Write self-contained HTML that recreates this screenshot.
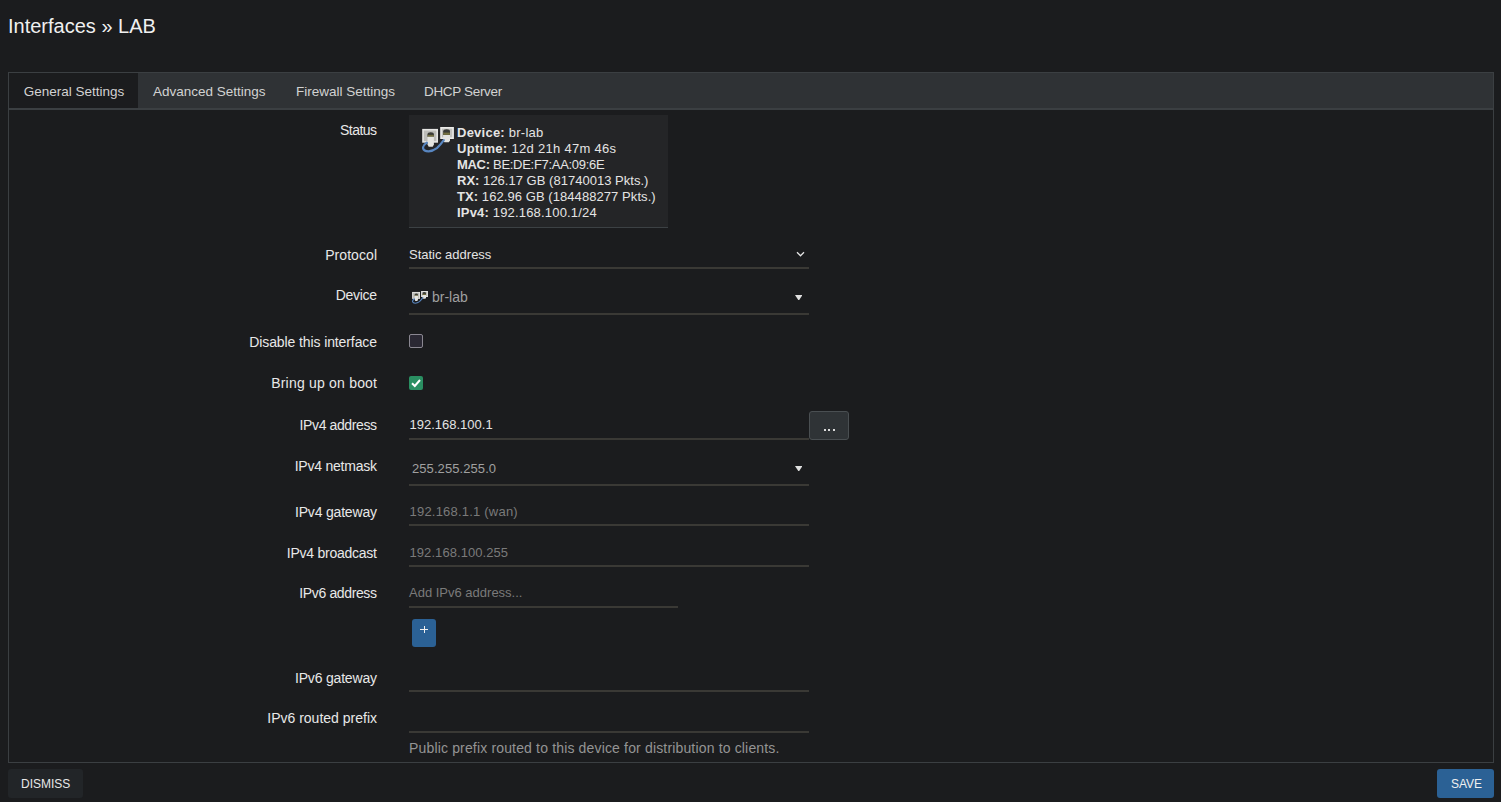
<!DOCTYPE html>
<html><head><meta charset="utf-8"><title>Interfaces » LAB</title>
<style>
html,body{margin:0;padding:0;width:1501px;height:802px;overflow:hidden;background:#1b1c1e;}
body{position:relative;font-family:"Liberation Sans",sans-serif;}
.t{position:absolute;white-space:nowrap;line-height:1;}
</style></head><body>
<div class="t" style="left:8px;top:16.07px;font-size:20px;color:#f0f0f0;font-weight:400;">Interfaces &raquo; LAB</div>
<div style="position:absolute;left:8px;top:72px;width:1486px;height:691px;box-sizing:border-box;border:1px solid #3b3f42;"></div>
<div style="position:absolute;left:9px;top:73px;width:1484px;height:35px;background:#2f3235;"></div>
<div style="position:absolute;left:9px;top:108px;width:1484px;height:2px;background:#3b3f42;"></div>
<div style="position:absolute;left:9px;top:73px;width:129px;height:35px;background:#1b1c1e;"></div>
<div class="t" style="left:23.7px;top:84.57px;font-size:13.5px;color:#d2d2d2;font-weight:400;">General Settings</div>
<div class="t" style="left:153px;top:84.57px;font-size:13.5px;color:#d2d2d2;font-weight:400;">Advanced Settings</div>
<div class="t" style="left:296px;top:84.57px;font-size:13.5px;color:#d2d2d2;font-weight:400;">Firewall Settings</div>
<div class="t" style="left:424px;top:84.57px;font-size:13.5px;color:#d2d2d2;font-weight:400;letter-spacing:-0.34px;">DHCP Server</div>
<div class="t" style="right:1124.54px;top:123.15px;font-size:14px;color:#e8e8e8;font-weight:400;letter-spacing:-0.540px;">Status</div>
<div class="t" style="right:1123.9285714285716px;top:248.15px;font-size:14px;color:#e8e8e8;font-weight:400;letter-spacing:0.071px;">Protocol</div>
<div class="t" style="right:1124.3px;top:288.45px;font-size:14px;color:#e8e8e8;font-weight:400;letter-spacing:-0.300px;">Device</div>
<div class="t" style="right:1124.104761904762px;top:334.65px;font-size:14px;color:#e8e8e8;font-weight:400;letter-spacing:-0.105px;">Disable this interface</div>
<div class="t" style="right:1123.7933333333333px;top:376.45px;font-size:14px;color:#e8e8e8;font-weight:400;letter-spacing:0.207px;">Bring up on boot</div>
<div class="t" style="right:1124.3909090909092px;top:418.45px;font-size:14px;color:#e8e8e8;font-weight:400;letter-spacing:-0.391px;">IPv4 address</div>
<div class="t" style="right:1124.2272727272727px;top:458.95px;font-size:14px;color:#e8e8e8;font-weight:400;letter-spacing:-0.227px;">IPv4 netmask</div>
<div class="t" style="right:1124.1818181818182px;top:505.15px;font-size:14px;color:#e8e8e8;font-weight:400;letter-spacing:-0.182px;">IPv4 gateway</div>
<div class="t" style="right:1124.246153846154px;top:545.85px;font-size:14px;color:#e8e8e8;font-weight:400;letter-spacing:-0.246px;">IPv4 broadcast</div>
<div class="t" style="right:1124.3636363636365px;top:586.05px;font-size:14px;color:#e8e8e8;font-weight:400;letter-spacing:-0.364px;">IPv6 address</div>
<div class="t" style="right:1124.1818181818182px;top:671.15px;font-size:14px;color:#e8e8e8;font-weight:400;letter-spacing:-0.182px;">IPv6 gateway</div>
<div class="t" style="right:1124.0px;top:711.45px;font-size:14px;color:#e8e8e8;font-weight:400;letter-spacing:0.000px;">IPv6 routed prefix</div>
<div style="position:absolute;left:409px;top:115px;width:259px;height:113px;background:#242527;border-bottom:1px solid #3c4144;box-sizing:border-box;"></div>
<svg width="32" height="28" viewBox="0 0 32 28" style="position:absolute;left:422px;top:125px">
<rect x="0.2" y="3.9" width="15.8" height="13.8" fill="#e6e6e4"/>
<rect x="1.8" y="5.5" width="12.6" height="10.6" fill="#bcbcb8"/>
<path d="M5.5 12 V9.2 Q5.5 7.2 8.7 7.2 Q11.9 7.2 11.9 9.2 V12 Z" fill="#3a3b37"/>
<rect x="5.6" y="9.9" width="6.2" height="1.8" fill="#747040"/>
<path d="M5.5 11.7 H11.9 V19.5 L10.7 21.8 H6.7 L5.5 19.5 Z" fill="#e4e4e0"/>
<rect x="18.2" y="2" width="13.7" height="12" fill="#ebebe9"/>
<rect x="19.8" y="3.6" width="10.5" height="8.8" fill="#c0c0bc"/>
<path d="M21.2 9.9 V6.2 Q21.2 4.2 24.6 4.2 Q28 4.2 28 6.2 V9.9 Z" fill="#3a3b37"/>
<rect x="21.3" y="7.6" width="6.6" height="2.3" fill="#747040"/>
<path d="M21.2 9.9 H28 V15.5 L26.8 17.3 H22.4 L21.2 15.5 Z" fill="#e4e4e0"/>
<path d="M21.8 15.2 Q18 20.5 14.9 23.2 Q10.5 26.4 6.6 26.4 Q1.4 26.2 1 23 Q1 20.2 4.8 17.6" fill="none" stroke="#5886c0" stroke-width="2.2" stroke-linecap="round"/>
</svg>
<div class="t" style="left:457px;top:126.00px;font-size:13px;color:#e4e4e4;font-weight:400;letter-spacing:0.24px;"><b>Device:</b> br-lab</div>
<div class="t" style="left:457px;top:142.00px;font-size:13px;color:#e4e4e4;font-weight:400;letter-spacing:0.3px;"><b>Uptime:</b> 12d 21h 47m 46s</div>
<div class="t" style="left:457px;top:158.00px;font-size:13px;color:#e4e4e4;font-weight:400;letter-spacing:-0.3px;"><b>MAC:</b> BE:DE:F7:AA:09:6E</div>
<div class="t" style="left:457px;top:174.00px;font-size:13px;color:#e4e4e4;font-weight:400;letter-spacing:0.02px;"><b>RX:</b> 126.17 GB (81740013 Pkts.)</div>
<div class="t" style="left:457px;top:190.00px;font-size:13px;color:#e4e4e4;font-weight:400;letter-spacing:0.07px;"><b>TX:</b> 162.96 GB (184488277 Pkts.)</div>
<div class="t" style="left:457px;top:206.00px;font-size:13px;color:#e4e4e4;font-weight:400;letter-spacing:0.18px;"><b>IPv4:</b> 192.168.100.1/24</div>
<div style="position:absolute;left:409px;top:267px;width:400px;height:2px;background:#3a3935;"></div>
<div style="position:absolute;left:409px;top:313px;width:400px;height:2px;background:#3a3935;"></div>
<div style="position:absolute;left:409px;top:438px;width:400px;height:2px;background:#3a3935;"></div>
<div style="position:absolute;left:409px;top:484px;width:400px;height:2px;background:#3a3935;"></div>
<div style="position:absolute;left:409px;top:524px;width:400px;height:2px;background:#3a3935;"></div>
<div style="position:absolute;left:409px;top:565px;width:400px;height:2px;background:#3a3935;"></div>
<div style="position:absolute;left:409px;top:606px;width:269px;height:2px;background:#3a3935;"></div>
<div style="position:absolute;left:409px;top:690px;width:400px;height:2px;background:#3a3935;"></div>
<div style="position:absolute;left:409px;top:731px;width:400px;height:2px;background:#3a3935;"></div>
<div class="t" style="left:409px;top:248.00px;font-size:13px;color:#e4e4e4;font-weight:400;">Static address</div>
<svg width="9" height="7" viewBox="0 0 9 7" style="position:absolute;left:795.5px;top:251px"><path d="M1 1.2 L4.5 4.8 L8 1.2" fill="none" stroke="#e6e6e6" stroke-width="1.25"/></svg>
<svg width="16" height="14" viewBox="0 0 32 28" style="position:absolute;left:412.4px;top:290px">
<rect x="0.2" y="3.9" width="15.8" height="13.8" fill="#e6e6e4"/>
<rect x="1.8" y="5.5" width="12.6" height="10.6" fill="#bcbcb8"/>
<path d="M5.5 12 V9.2 Q5.5 7.2 8.7 7.2 Q11.9 7.2 11.9 9.2 V12 Z" fill="#3a3b37"/>
<rect x="5.6" y="9.9" width="6.2" height="1.8" fill="#747040"/>
<path d="M5.5 11.7 H11.9 V19.5 L10.7 21.8 H6.7 L5.5 19.5 Z" fill="#e4e4e0"/>
<rect x="18.2" y="2" width="13.7" height="12" fill="#ebebe9"/>
<rect x="19.8" y="3.6" width="10.5" height="8.8" fill="#c0c0bc"/>
<path d="M21.2 9.9 V6.2 Q21.2 4.2 24.6 4.2 Q28 4.2 28 6.2 V9.9 Z" fill="#3a3b37"/>
<rect x="21.3" y="7.6" width="6.6" height="2.3" fill="#747040"/>
<path d="M21.2 9.9 H28 V15.5 L26.8 17.3 H22.4 L21.2 15.5 Z" fill="#e4e4e0"/>
<path d="M21.8 15.2 Q18 20.5 14.9 23.2 Q10.5 26.4 6.6 26.4 Q1.4 26.2 1 23 Q1 20.2 4.8 17.6" fill="none" stroke="#5886c0" stroke-width="2.2" stroke-linecap="round"/>
</svg>
<div class="t" style="left:432px;top:290.15px;font-size:14px;color:#a0a0a0;font-weight:400;">br-lab</div>
<svg width="7.5" height="5.7" viewBox="0 0 8 6" preserveAspectRatio="none" style="position:absolute;left:794.5px;top:294.5px"><path d="M0 0 H8 L4 6 Z" fill="#e0e0e0"/></svg>
<div style="position:absolute;left:409px;top:334px;width:14px;height:14px;box-sizing:border-box;border:1px solid #8a8791;border-radius:2px;background:#2a2833;"></div>
<div style="position:absolute;left:409px;top:376px;width:14px;height:14px;border-radius:2px;background:#2a8f62;"></div>
<svg width="14" height="14" viewBox="0 0 14 14" style="position:absolute;left:409px;top:376px"><path d="M3 7.2 L5.8 10 L11 4" fill="none" stroke="#fff" stroke-width="2"/></svg>
<div class="t" style="left:409.5px;top:418.00px;font-size:13px;color:#e4e4e4;font-weight:400;">192.168.100.1</div>
<div style="position:absolute;left:809px;top:411px;width:40px;height:29px;box-sizing:border-box;border:1px solid #4a4f52;border-radius:3px;background:#2f3336;"></div>
<div style="position:absolute;left:823.5px;top:429px;width:2.2000000000000455px;height:2px;background:#dcdcdc;"></div>
<div style="position:absolute;left:828px;top:429px;width:2.2000000000000455px;height:2px;background:#dcdcdc;"></div>
<div style="position:absolute;left:832.5px;top:429px;width:2.2000000000000455px;height:2px;background:#dcdcdc;"></div>
<div class="t" style="left:412px;top:462.00px;font-size:13px;color:#a0a0a0;font-weight:400;letter-spacing:0.08px;">255.255.255.0</div>
<svg width="7.5" height="5.7" viewBox="0 0 8 6" preserveAspectRatio="none" style="position:absolute;left:794.5px;top:465.5px"><path d="M0 0 H8 L4 6 Z" fill="#e0e0e0"/></svg>
<div class="t" style="left:409.5px;top:505.00px;font-size:13px;color:#7a7a7a;font-weight:400;letter-spacing:0.21px;">192.168.1.1 (wan)</div>
<div class="t" style="left:409.5px;top:546.00px;font-size:13px;color:#7a7a7a;font-weight:400;letter-spacing:0.07px;">192.168.100.255</div>
<div class="t" style="left:409px;top:586.00px;font-size:13px;color:#7a7a7a;font-weight:400;">Add IPv6 address...</div>
<div style="position:absolute;left:412px;top:619px;width:24px;height:28px;border-radius:3px;background:#2b6195;"></div>
<div style="position:absolute;left:420px;top:629px;width:8px;height:1.2000000000000455px;background:#f0f0f0;"></div>
<div style="position:absolute;left:423.5px;top:626px;width:1.1999999999999886px;height:7px;background:#f0f0f0;"></div>
<div class="t" style="left:409px;top:740.75px;font-size:14px;color:#949494;font-weight:400;letter-spacing:0.16px;">Public prefix routed to this device for distribution to clients.</div>
<div style="position:absolute;left:8px;top:769px;width:75px;height:29px;border-radius:3px;background:#222528;"></div>
<div class="t" style="left:21px;top:777.84px;font-size:12px;color:#e8e8e8;font-weight:400;">DISMISS</div>
<div style="position:absolute;left:1437px;top:769px;width:57px;height:29px;border-radius:3px;background:#2b6195;"></div>
<div class="t" style="left:1451px;top:778.34px;font-size:12px;color:#f0f0f0;font-weight:400;">SAVE</div>
</body></html>
